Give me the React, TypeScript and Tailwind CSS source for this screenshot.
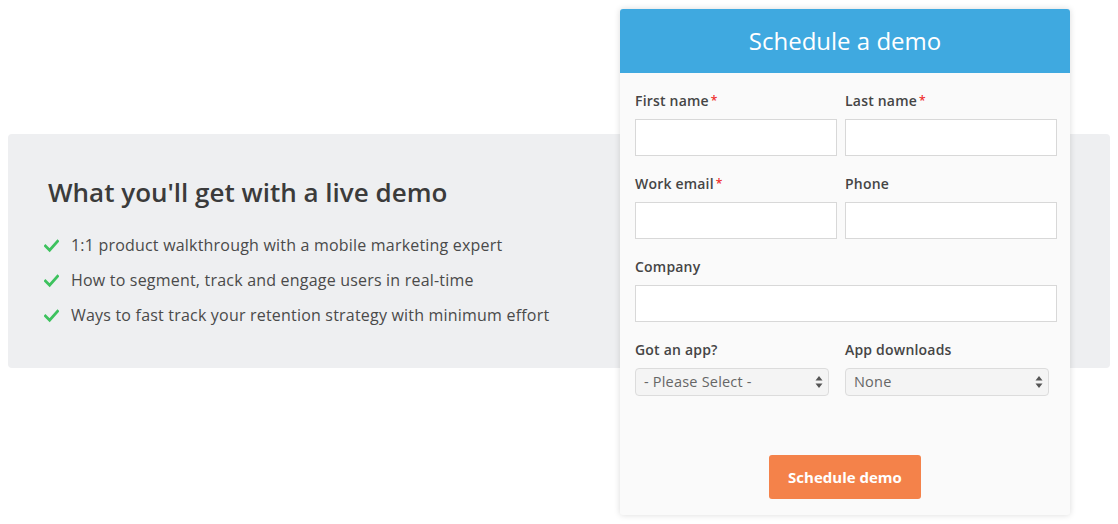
import React from 'react';

const BENEFITS = [
  '1:1 product walkthrough with a mobile marketing expert',
  'How to segment, track and engage users in real-time',
  'Ways to fast track your retention strategy with minimum effort',
];

function Check() {
  return (
    <svg viewBox="0 0 16 16" className="w-[15px] h-[15px] shrink-0">
      <path d="M1.5 8.5 L6 13 L14.5 3.5" fill="none" stroke="#3dc25e" strokeWidth="3" strokeLinecap="square" />
    </svg>
  );
}

function Label({ text, required }: { text: string; required?: boolean }) {
  return (
    <div className="h-[18px] text-[14px] leading-[18px] tracking-[0.2px] font-semibold text-[#454545] mb-[9px]">
      {text}
      {required && <span className="text-[#ef2d2d] text-[12px] align-top ml-[2px]">*</span>}
    </div>
  );
}

function Input({ w }: { w: string }) {
  return <div className={`${w} h-[37px] bg-white border border-[#d8d8d8]`} />;
}

function Select({ w, value }: { w: string; value: string }) {
  return (
    <div className={`${w} h-[28px] flex items-center justify-between pl-[8px] pr-[5px] bg-[#f4f4f4] border border-[#dcdcdc] rounded-[4px] text-[14.5px] tracking-[0.2px] text-[#666]`}>
      <span>{value}</span>
      <svg viewBox="0 0 8 14" className="w-[8px] h-[14px]">
        <path d="M4 1 L7.5 5.5 H0.5 Z M4 13 L7.5 8.5 H0.5 Z" fill="#555" />
      </svg>
    </div>
  );
}

export default function App() {
  return (
    <div className="relative w-full h-[524px] bg-white overflow-hidden" style={{ fontFamily: '"Open Sans", Lato, sans-serif' }}>
      <div className="mx-2 mt-[134px] h-[234px] rounded-[4px] bg-[#eeeff1] pl-10 pt-[42px]">
        <h2 className="text-[26px] leading-[32px] font-semibold text-[#3b3b3b]">What you'll get with a live demo</h2>
        <ul className="mt-[27px] -ml-[4px] flex flex-col gap-[14px]">
          {BENEFITS.map((b) => (
            <li key={b} className="flex items-center gap-[12px] text-[16px] leading-[21px] tracking-[0.2px] text-[#4a4a4a]">
              <Check />
              {b}
            </li>
          ))}
        </ul>
      </div>

      <div className="absolute left-[620px] top-[9px] w-[450px] h-[506px] rounded-[3px] overflow-hidden bg-[#fafafa] shadow-[0_0_6px_rgba(0,0,0,0.15)]">
        <div className="h-[64px] bg-[#3fa9e0] flex items-center justify-center text-white text-[24px] pb-[1px]">
          Schedule a demo
        </div>
        <div className="pl-[15px] pt-[19px]">
          <div className="flex gap-[8px]">
            <div>
              <Label text="First name" required />
              <Input w="w-[202px]" />
            </div>
            <div>
              <Label text="Last name" required />
              <Input w="w-[212px]" />
            </div>
          </div>
          <div className="flex gap-[8px] mt-[19px]">
            <div>
              <Label text="Work email" required />
              <Input w="w-[202px]" />
            </div>
            <div>
              <Label text="Phone" />
              <Input w="w-[212px]" />
            </div>
          </div>
          <div className="mt-[19px]">
            <Label text="Company" />
            <Input w="w-[422px]" />
          </div>
          <div className="flex gap-[16px] mt-[19px]">
            <div>
              <Label text="Got an app?" />
              <Select w="w-[194px]" value="- Please Select -" />
            </div>
            <div>
              <Label text="App downloads" />
              <Select w="w-[204px]" value="None" />
            </div>
          </div>
        </div>
        <div className="flex justify-center mt-[59px]">
          <button className="w-[152px] h-[44px] rounded-[3px] bg-[#f4824a] text-white text-[15px] font-bold">
            Schedule demo
          </button>
        </div>
      </div>
    </div>
  );
}
